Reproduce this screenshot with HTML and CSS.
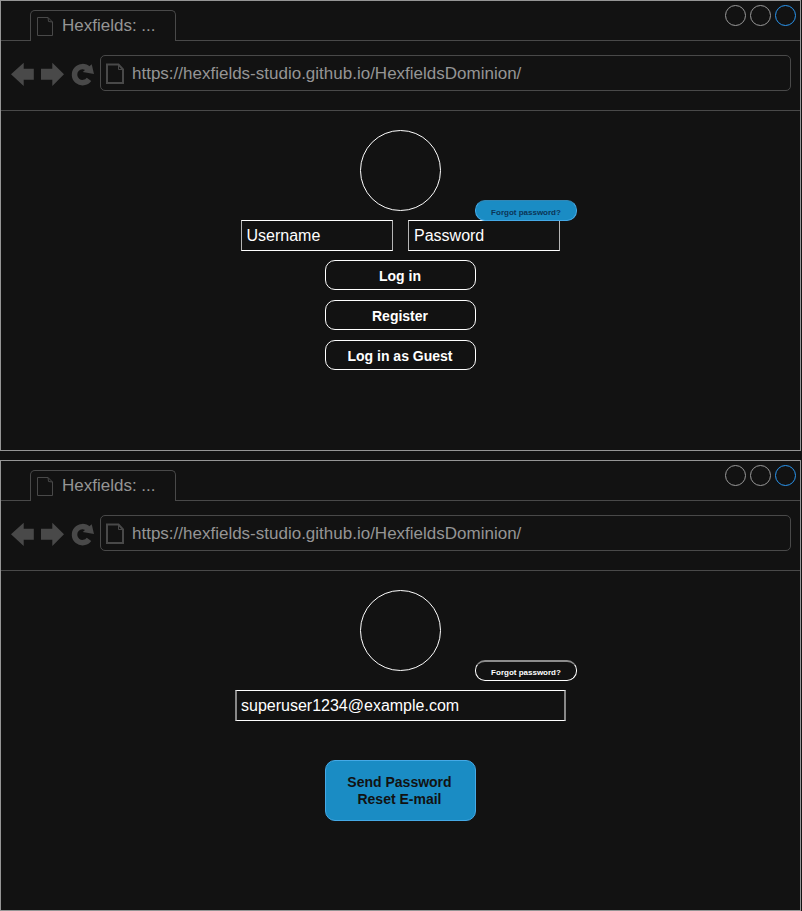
FILE: index.html
```html
<!DOCTYPE html>
<html lang="en">
<head>
<meta charset="utf-8">
<title>Hexfields: Dominion</title>
<link rel="stylesheet" href="styles.css">
</head>
<body>
<svg class="defs" aria-hidden="true">
  <symbol id="page" viewBox="0 0 18 21"><path d="M1.5 1.5h10.500l4.500 4.500v13.500h-15zM12 1.500l.5 4 4 .5"/></symbol>
  <symbol id="page-bold" viewBox="0 0 18 21"><path d="M1 1.500h11.500l4.500 5v13.500H1z"/><path class="fold" d="M12.500 2v4.500H17"/></symbol>
  <symbol id="nav" viewBox="0 0 84 25">
    <path d="M0 12.300 12.700 .7V6.700H22.800v11H12.700v6.200zM53 12.300 41.300 .7V6.700H30v11h11.300v6.200z"/>
    <path d="M77.200 7A8 8 0 1 0 78 17.300" class="arc"/>
    <path d="M80.700 2.300 83 11.900 71.700 10z"/>
  </symbol>
</svg>

<section class="window">
  <header class="titlebar">
    <div class="lead"></div>
    <div class="tab"><svg class="tab-icon"><use href="#page"/></svg><span>Hexfields: ...</span></div>
    <div class="controls"><i></i><i></i><i class="close"></i></div>
  </header>
  <nav class="toolbar">
    <svg class="nav-icons"><use href="#nav"/></svg>
    <div class="address"><svg class="address-icon"><use href="#page-bold"/></svg><span>https://hexfields-studio.github.io/HexfieldsDominion/</span></div>
  </nav>
  <main class="content">
    <div class="avatar"></div>
    <div class="fields">
      <div class="field">Username</div>
      <div class="field">Password</div>
      <div class="forgot active"><span>Forgot password?</span></div>
    </div>
    <div class="button">Log in</div>
    <div class="button">Register</div>
    <div class="button">Log in as Guest</div>
  </main>
</section>

<section class="window">
  <header class="titlebar">
    <div class="lead"></div>
    <div class="tab"><svg class="tab-icon"><use href="#page"/></svg><span>Hexfields: ...</span></div>
    <div class="controls"><i></i><i></i><i class="close"></i></div>
  </header>
  <nav class="toolbar">
    <svg class="nav-icons"><use href="#nav"/></svg>
    <div class="address"><svg class="address-icon"><use href="#page-bold"/></svg><span>https://hexfields-studio.github.io/HexfieldsDominion/</span></div>
  </nav>
  <main class="content">
    <div class="avatar"></div>
    <div class="fields reset">
      <div class="field email">superuser1234@example.com</div>
      <div class="forgot"><span>Forgot password?</span></div>
    </div>
    <div class="button send">Send Password<br>Reset E-mail</div>
  </main>
</section>
</body>
</html>
```

FILE: styles.css
```css
* { box-sizing: border-box; }
body {
  margin: 0;
  background: #121212;
  color: #fff;
  font-family: "Liberation Sans", Arial, sans-serif;
  display: flex;
  flex-direction: column;
  gap: 9px;
}
.defs { position: absolute; width: 0; height: 0; }
.window {
  width: 801px;
  height: 451px;
  border: 1px solid #959595;
}
.titlebar { display: flex; height: 40px; }
.lead { width: 29px; border-bottom: 1px solid #494949; }
.tab {
  width: 146px;
  height: 31px;
  margin-top: 9px;
  border: 1px solid #494949;
  border-bottom: 0;
  border-radius: 5px 5px 0 0;
  display: flex;
  padding-left: 5px;
  color: #959595;
  font-size: 17px;
  line-height: 30px;
}
.tab-icon {
  width: 18px;
  height: 21px;
  margin: 5px 8px 0 0;
  fill: none;
  stroke: #494949;
}
.controls {
  flex: 1;
  display: flex;
  justify-content: flex-end;
  gap: 4px;
  padding: 4px 4px 0 0;
  border-bottom: 1px solid #494949;
}
.controls i {
  width: 21px;
  height: 21px;
  border: 1px solid #999;
  border-radius: 50%;
}
.controls .close { border-color: #2a96f0; }
.toolbar {
  height: 70px;
  display: flex;
  padding: 14px 9px 0 10px;
  border-bottom: 1px solid #494949;
}
.nav-icons {
  width: 84px;
  height: 25px;
  margin: 7px 5px 0 0;
  fill: #494949;
}
.arc { fill: none; stroke: #494949; stroke-width: 5.5; }
.address {
  width: 691px;
  height: 36px;
  border: 1px solid #494949;
  border-radius: 5px;
  display: flex;
  padding-left: 5px;
  color: #959595;
  font-size: 17px;
  line-height: 35px;
}
.address-icon {
  width: 18px;
  height: 21px;
  margin: 7px 8px 0 0;
  fill: none;
  stroke: #494949;
  stroke-width: 2;
}
.fold { stroke-width: 1; }
.content {
  display: flex;
  flex-direction: column;
  align-items: center;
  padding-top: 19px;
}
.avatar {
  width: 81px;
  height: 81px;
  border: 1px solid #fff;
  border-radius: 50%;
}
.fields {
  position: relative;
  display: flex;
  gap: 15px;
  margin: 9px 0 9px;
}
.field {
  width: 152px;
  height: 31px;
  border: 1px solid #fff;
  border-left-color: #b5b5b5;
  border-right-color: #b5b5b5;
  padding-left: 4.5px;
  font-size: 16px;
  line-height: 30px;
}
.field + .field { padding-left: 5px; }
.forgot {
  position: absolute;
  left: 234px;
  top: -20px;
  width: 102px;
  height: 21px;
  border: 1px solid #fff;
  border-radius: 10px;
  text-align: center;
  font-weight: bold;
  font-size: 8px;
  line-height: 23px;
}
.active { background: #1a8cc4; border-color: #45a9e6; border-top-color: #3287b5; color: #0b3557; }
.reset { margin: 19px 0 39px; }
.email {
  width: 331px;
  padding-left: 4px;
  border-left: 2px solid #888;
  border-right: 2px solid #888;
}
.reset .forgot {
  left: 240px;
  top: -30px;
  border-top: 2px solid #8c8c8c;
  line-height: 21px;
}
.button {
  width: 151px;
  height: 30px;
  margin-bottom: 10px;
  padding-right: 1px;
  border: 1px solid #fff;
  border-radius: 10px;
  text-align: center;
  font-weight: bold;
  font-size: 14px;
  line-height: 30px;
}
.send {
  height: 61px;
  padding: 13px 2px 0 0;
  background: #1a8cc4;
  border-color: #45a9e6;
  color: #121212;
  line-height: 17px;
}
```
